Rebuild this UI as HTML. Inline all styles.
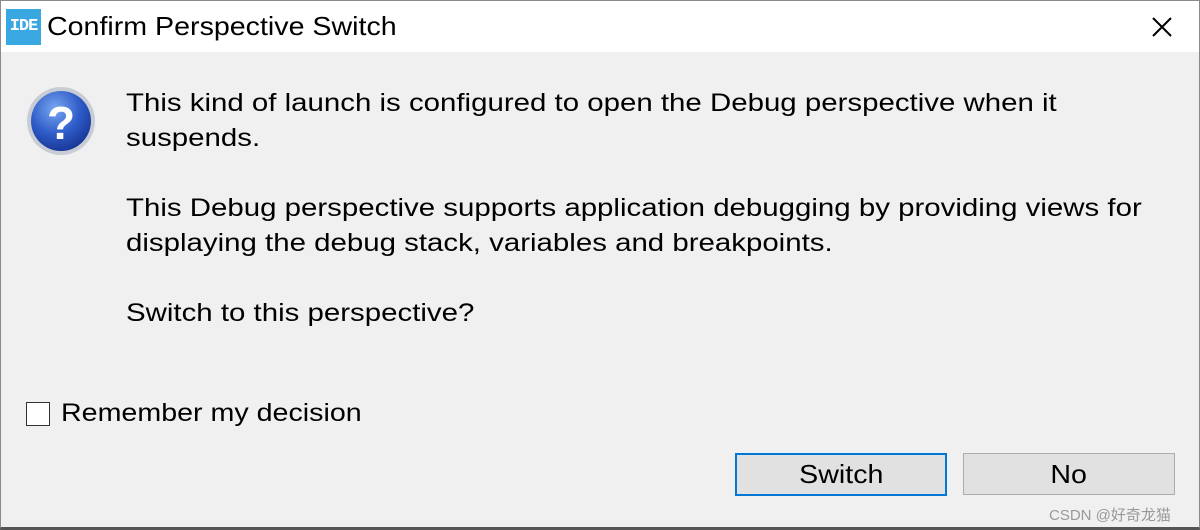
<!DOCTYPE html>
<html><head><style>
body{margin:0;width:1200px;height:530px;overflow:hidden;background:#f0f0f0;font-family:"Liberation Sans","Noto Sans CJK SC",sans-serif;position:relative}
.win{position:absolute;left:0;top:0;width:1198px;height:526px;border:1px solid #8a8a8a;border-bottom:3px solid #555;background:#f0f0f0}
.title{position:absolute;left:0;top:0;width:1198px;height:51px;background:#fff}
.t{position:absolute;font-size:25px;color:#000;white-space:nowrap;transform-origin:0 0;transform:scaleX(1.177)}
.btn{position:absolute;height:40px;background:#e1e1e1;border:1px solid #adadad;font-size:26px;text-align:center;line-height:40px}
.btn span{display:inline-block;transform:scaleX(1.1)}
</style></head><body>
<div class="win">
<div class="title">
 <div style="position:absolute;left:5px;top:8px;width:35px;height:36px;background:#3aa8e0;color:#fff;font:bold 17px 'Liberation Mono',monospace;line-height:36px;text-align:center;letter-spacing:-1px">IDE</div>
 <div class="t" style="left:46px;top:10px;font-size:26px;transform:scaleX(1.1)">Confirm Perspective Switch</div>
 <svg style="position:absolute;left:1150px;top:15px" width="22" height="22"><path d="M2 2L20 20M20 2L2 20" stroke="#000" stroke-width="2"/></svg>
</div>
<svg style="position:absolute;left:24px;top:84px" width="72" height="72" viewBox="0 0 72 72">
 <defs><radialGradient id="g" cx="40%" cy="30%" r="70%"><stop offset="0" stop-color="#7aa8f0"/><stop offset=".6" stop-color="#2e5cc8"/><stop offset="1" stop-color="#1a3a9a"/></radialGradient></defs>
 <circle cx="36" cy="36" r="34" fill="#c8ccd4"/><circle cx="36" cy="36" r="30" fill="url(#g)"/>
 <text x="36" y="54" font-family="Liberation Sans" font-weight="bold" font-size="46" fill="#fff" text-anchor="middle">?</text>
</svg>
<div class="t" style="left:125px;top:88px">This kind of launch is configured to open the Debug perspective when it</div>
<div class="t" style="left:125px;top:123px">suspends.</div>
<div class="t" style="left:125px;top:193px">This Debug perspective supports application debugging by providing views for</div>
<div class="t" style="left:125px;top:228px">displaying the debug stack, variables and breakpoints.</div>
<div class="t" style="left:125px;top:298px">Switch to this perspective?</div>
<div style="position:absolute;left:25px;top:401px;width:22px;height:22px;border:1px solid #333;background:#fff"></div>
<div class="t" style="left:60px;top:398px;transform:scaleX(1.145)">Remember my decision</div>
<div class="btn" style="left:734px;top:452px;width:208px;border:2px solid #0078d7;height:39px;line-height:39px"><span>Switch</span></div>
<div class="btn" style="left:962px;top:452px;width:210px"><span>No</span></div>
<div class="t" style="left:1048px;top:503px;font-size:15px;color:#999;transform:none">CSDN @好奇龙猫</div>
</div>
</body></html>
